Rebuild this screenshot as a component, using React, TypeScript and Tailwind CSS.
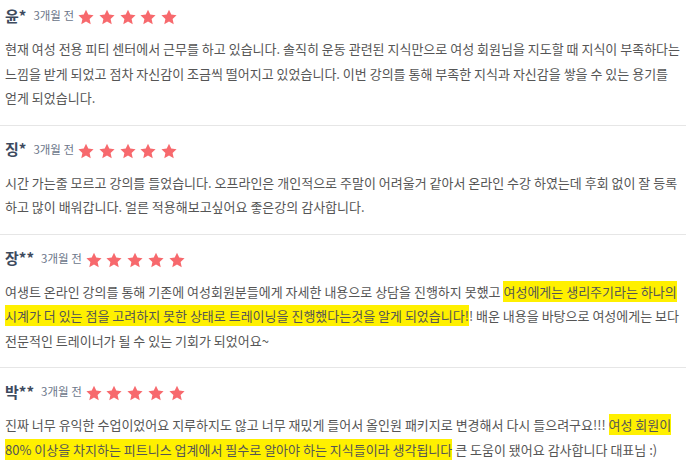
import React from "react";

type Part = { text: string; mark?: boolean };

interface Review {
  name: string;
  date: string;
  body: Part[];
}

const reviews: Review[] = [
  {
    name: "윤*",
    date: "3개월 전",
    body: [
      {
        text: "현재 여성 전용 피티 센터에서 근무를 하고 있습니다. 솔직히 운동 관련된 지식만으로 여성 회원님을 지도할 때 지식이 부족하다는 느낌을 받게 되었고 점차 자신감이 조금씩 떨어지고 있었습니다. 이번 강의를 통해 부족한 지식과 자신감을 쌓을 수 있는 용기를 얻게 되었습니다.",
      },
    ],
  },
  {
    name: "징*",
    date: "3개월 전",
    body: [
      {
        text: "시간 가는줄 모르고 강의를 들었습니다. 오프라인은 개인적으로 주말이 어려울거 같아서 온라인 수강 하였는데 후회 없이 잘 등록하고 많이 배워갑니다. 얼른 적용해보고싶어요 좋은강의 감사합니다.",
      },
    ],
  },
  {
    name: "장**",
    date: "3개월 전",
    body: [
      { text: "여생트 온라인 강의를 통해 기존에 여성회원분들에게 자세한 내용으로 상담을 진행하지 못했고 " },
      {
        text: "여성에게는 생리주기라는 하나의 시계가 더 있는 점을 고려하지 못한 상태로 트레이닝을 진행했다는것을 알게 되었습니다!",
        mark: true,
      },
      { text: "! 배운 내용을 바탕으로 여성에게는 보다 전문적인 트레이너가 될 수 있는 기회가 되었어요~" },
    ],
  },
  {
    name: "박**",
    date: "3개월 전",
    body: [
      { text: "진짜 너무 유익한 수업이었어요 지루하지도 않고 너무 재밌게 들어서 올인원 패키지로 변경해서 다시 들으려구요!!! " },
      {
        text: "여성 회원이 80% 이상을 차지하는 피트니스 업계에서 필수로 알아야 하는 지식들이라 생각됩니다",
        mark: true,
      },
      { text: " 큰 도움이 됐어요 감사합니다 대표님 :)" },
    ],
  },
];

const Star = () => (
  <svg width="18" height="18" viewBox="0 0 24 24" className="shrink-0">
    <path
      d="M12 2.2l3 6.6 7.1.8-5.3 4.9 1.5 7.1L12 18l-6.3 3.6 1.5-7.1-5.3-4.9 7.1-.8z"
      fill="#f7696d"
    />
  </svg>
);

const ReviewItem = ({ item, first }: { item: Review; first: boolean }) => (
  <div className={`border-b border-[#e6e6e6] px-[5px] pb-[14px] ${first ? "pt-[6px]" : "pt-[14px]"}`}>
    <div className="flex h-[20px] items-center">
      <span className="text-[15px] font-bold text-[#3d4a5e]">{item.name}</span>
      <span className="ml-[7px] text-[11.5px] text-[#6b7689]">{item.date}</span>
      <div className="ml-[3px] flex translate-y-[1px] items-center gap-[2.75px]">
        {[0, 1, 2, 3, 4].map((i) => (
          <Star key={i} />
        ))}
      </div>
    </div>
    <p className="mt-[11px] text-[13px] leading-[24.5px] text-[#555]">
      {item.body.map((part, i) =>
        part.mark ? (
          <mark key={i} className="bg-[#fff000] py-[1px] text-[#555]">
            {part.text}
          </mark>
        ) : (
          <span key={i}>{part.text}</span>
        )
      )}
    </p>
  </div>
);

export default function App() {
  return (
    <div
      className="h-[468px] w-[686px] overflow-hidden bg-white"
      style={{ fontFamily: '"Noto Sans CJK KR", "Noto Sans", sans-serif' }}
    >
      {reviews.map((item, index) => (
        <ReviewItem key={index} item={item} first={index === 0} />
      ))}
    </div>
  );
}
